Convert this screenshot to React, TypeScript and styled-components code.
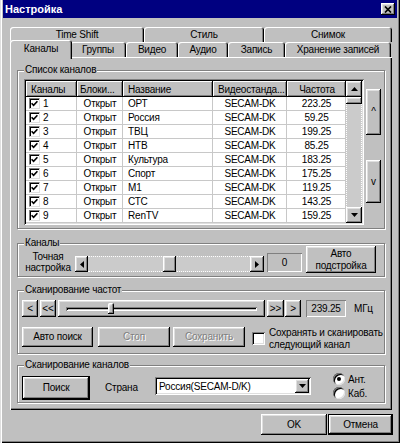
import React from 'react'
import styled, { createGlobalStyle, css } from 'styled-components'

const GlobalStyle = createGlobalStyle`
  html, body {
    margin: 0;
    padding: 0;
    background: #c0c0c0;
  }
  body {
    font-family: 'Liberation Sans', Arial, sans-serif;
    font-size: 10px;
    letter-spacing: -0.2px;
    color: #000;
  }
  * {
    box-sizing: border-box;
  }
`

const raised = css`
  background: #c0c0c0;
  box-shadow: inset -1px -1px #000, inset 1px 1px #fff, inset -2px -2px #808080,
    inset 2px 2px #dfdfdf;
`

const sunken = css`
  box-shadow: inset 1px 1px #808080, inset -1px -1px #fff, inset 2px 2px #000,
    inset -2px -2px #dfdfdf;
`

const staticEdge = css`
  box-shadow: inset 1px 1px #808080, inset -1px -1px #fff;
`

const Window = styled.div`
  width: 400px;
  height: 443px;
  background: #c0c0c0;
  padding: 0 3px 8px 3px;
  box-shadow: inset 1px 0 #dfdfdf, inset 2px 0 #fff, inset -1px -1px #000,
    inset -2px -2px #808080;
  display: flex;
  flex-direction: column;
`

const TitleBar = styled.div`
  height: 18px;
  background: #000080;
  color: #fff;
  display: flex;
  align-items: center;
  justify-content: space-between;
  padding: 0 2px;
`

const TitleText = styled.span`
  font-size: 11px;
  font-weight: bold;
  letter-spacing: 0;
`

const CloseButton = styled.button`
  ${raised};
  width: 14px;
  height: 12px;
  border: 0;
  padding: 0;
  display: flex;
  align-items: center;
  justify-content: center;
`

const TabStrip = styled.div`
  margin: 9px 0 0 7px;
  width: 382px;
  display: flex;
  flex-direction: column;
`

const TabRow = styled.div<{ $indent?: number }>`
  display: flex;
  height: 15px;
  align-items: flex-end;
  padding-left: ${p => p.$indent ?? 0}px;
`

const Tab = styled.div<{ $w: number; $active?: boolean }>`
  position: relative;
  flex: none;
  width: ${p => p.$w}px;
  height: 15px;
  display: flex;
  align-items: center;
  justify-content: center;
  background: #c0c0c0;
  border-radius: 3px 3px 0 0;
  box-shadow: inset 1px 1px #fff, inset -1px 0 #000, inset -2px 0 #808080;
  white-space: nowrap;

  ${p =>
    p.$active &&
    css`
      width: ${p.$w + 4}px;
      height: 19px;
      margin: 0 -2px -2px;
      padding-bottom: 2px;
      z-index: 1;
    `}
`

const Panel = styled.div`
  margin-left: 7px;
  width: 382px;
  height: 353px;
  padding: 13px 7px 7px;
  box-shadow: inset 1px 1px #fff, inset -1px -1px #000, inset -2px -2px #808080;
  display: flex;
  flex-direction: column;
`

const Group = styled.div<{ $mt?: number; $pad: string }>`
  position: relative;
  margin-top: ${p => p.$mt ?? 0}px;
  padding: ${p => p.$pad};
  border: 1px solid #808080;
  box-shadow: inset 1px 1px #fff, 1px 1px #fff;
`

const Legend = styled.span`
  position: absolute;
  top: -7px;
  left: 6px;
  padding: 0 1px;
  line-height: 12px;
  background: #c0c0c0;
  white-space: nowrap;
`

const ListArea = styled.div`
  display: flex;
  align-items: flex-start;
`

const ListView = styled.div`
  width: 340px;
  height: 146px;
  padding: 2px;
  background: #fff;
  ${sunken};
  display: flex;
`

const ListTable = styled.div`
  flex: 1;
  display: flex;
  flex-direction: column;
  overflow: hidden;
`

const columns = css`
  display: grid;
  grid-template-columns: 51px 46px 90px 74px 59px;
`

const HeaderRow = styled.div`
  ${columns};
  height: 16px;
`

const HeaderCell = styled.div<{ $center?: boolean }>`
  background: #c0c0c0;
  box-shadow: inset -1px -1px #000, inset 1px 1px #fff, inset -2px -2px #808080;
  display: flex;
  align-items: center;
  justify-content: ${p => (p.$center ? 'center' : 'flex-start')};
  padding: 0 4px 0 5px;
  white-space: nowrap;
  overflow: hidden;
`

const Row = styled.div`
  ${columns};
  height: 14px;
`

const Cell = styled.div<{ $align?: 'left' | 'center' }>`
  display: flex;
  align-items: center;
  justify-content: ${p => (p.$align === 'center' ? 'center' : 'flex-start')};
  padding: 0 4px 0 5px;
  border-right: 1px solid #c8c8c8;
  border-bottom: 1px solid #c8c8c8;
  white-space: nowrap;
  overflow: hidden;
`

const ChannelCell = styled(Cell)`
  padding-left: 3px;
  gap: 3px;
`

const ListCheck = styled.span`
  width: 11px;
  height: 11px;
  flex: none;
  background: #fff;
  border: 1px solid;
  border-color: #808080 #dfdfdf #dfdfdf #808080;
  box-shadow: inset 1px 1px #000;
  display: flex;
  align-items: center;
  justify-content: center;
`

const VScroll = styled.div`
  width: 16px;
  display: flex;
  flex-direction: column;
`

const ScrollButton = styled.div<{ $w?: number; $h?: number }>`
  ${raised};
  flex: none;
  width: ${p => p.$w ?? 16}px;
  height: ${p => p.$h ?? 16}px;
  display: flex;
  align-items: center;
  justify-content: center;
`

const VThumb = styled.div`
  ${raised};
  height: 7px;
  flex: none;
`

const VTrack = styled.div`
  flex: 1;
  background: #cbcbcb;
  border-left: 1px dotted #fff;
  border-right: 1px dotted #fff;
`

const SideButtons = styled.div`
  margin-left: 2px;
  padding-top: 10px;
  display: flex;
  flex-direction: column;
`

const Button = styled.button<{ $w: number; $h: number; $default?: boolean; $mt?: number }>`
  ${raised};
  flex: none;
  width: ${p => p.$w}px;
  height: ${p => p.$h}px;
  margin-top: ${p => p.$mt ?? 0}px;
  border: 0;
  padding: 0;
  font: inherit;
  letter-spacing: inherit;
  line-height: 12px;
  color: #000;
  text-align: center;
  display: flex;
  align-items: center;
  justify-content: center;

  ${p =>
    p.$default &&
    css`
      border: 1px solid #000;
    `}

  &:disabled {
    color: #808080;
    text-shadow: 1px 1px 0 #fff;
  }
`

const FlexRow = styled.div<{ $align?: string; $h?: number; $mt?: number }>`
  display: flex;
  align-items: ${p => p.$align ?? 'center'};
  height: ${p => (p.$h ? `${p.$h}px` : 'auto')};
  margin-top: ${p => p.$mt ?? 0}px;
`

const Spacer = styled.div<{ $w: number }>`
  flex: none;
  width: ${p => p.$w}px;
`

const FineLabel = styled.div`
  width: 46px;
  line-height: 11px;
  text-align: center;
`

const HScroll = styled.div<{ $w: number }>`
  width: ${p => p.$w}px;
  height: 16px;
  margin-bottom: 1px;
  display: flex;
`

const HTrack = styled.div`
  flex: 1;
  display: flex;
  background: #cbcbcb;
  border-top: 1px dotted #fff;
  border-bottom: 1px dotted #fff;
`

const HThumb = styled.div`
  ${raised};
  width: 13px;
  margin: -1px 0;
  flex: none;
`

const ValueBox = styled.div<{ $w: number; $h: number; $mb?: number }>`
  ${staticEdge};
  flex: none;
  width: ${p => p.$w}px;
  height: ${p => p.$h}px;
  margin-bottom: ${p => p.$mb ?? 0}px;
  display: flex;
  align-items: center;
  justify-content: center;
`

const Trackbar = styled.div`
  ${raised};
  position: relative;
  flex: none;
  width: 207px;
  height: 17px;
  padding: 0 8px;
  display: flex;
  align-items: center;
`

const Groove = styled.div`
  flex: 1;
  height: 4px;
  background: #c0c0c0;
  box-shadow: inset 1px 1px #808080, inset -1px -1px #fff, inset 2px 2px #000;
`

const TrackThumb = styled.div`
  ${raised};
  position: absolute;
  top: 3px;
  width: 6px;
  height: 11px;
  border-radius: 2px 2px 0 0;
`

const Unit = styled.span`
  margin-left: 8px;
`

const CheckBox = styled.span<{ $mt?: number }>`
  flex: none;
  width: 13px;
  height: 13px;
  margin-top: ${p => p.$mt ?? 0}px;
  background: #fff;
  ${sunken};
`

const CheckText = styled.div`
  margin-left: 4px;
  line-height: 12px;
  white-space: nowrap;
`

const CountryLabel = styled.div`
  width: 50px;
  line-height: 24px;
`

const Combo = styled.div`
  flex: none;
  width: 156px;
  height: 18px;
  margin-top: 1px;
  padding: 2px;
  background: #fff;
  ${sunken};
  display: flex;
  align-items: center;
`

const ComboText = styled.span`
  flex: 1;
  padding-left: 2px;
  white-space: nowrap;
`

const RadioGroup = styled.div`
  margin: -4px 0 0 22px;
  display: flex;
  flex-direction: column;
`

const RadioItem = styled.label`
  height: 14px;
  display: flex;
  align-items: center;
  gap: 3px;
`

const RadioCircle = styled.span`
  width: 12px;
  height: 12px;
  border-radius: 50%;
  background: #fff;
  box-shadow: inset 1px 1px #808080, inset -1px -1px #dfdfdf, inset 2px 2px #000;
  display: flex;
  align-items: center;
  justify-content: center;
`

const RadioDot = styled.span`
  width: 4px;
  height: 4px;
  border-radius: 50%;
  background: #000;
`

const DialogButtons = styled.div`
  margin: 4px 4px 0 0;
  display: flex;
  justify-content: flex-end;
  gap: 1px;
`

type Dir = 'left' | 'right' | 'up' | 'down'

const arrowPoints: Record<Dir, string> = {
  left: '4,0 4,7 0,3.5',
  right: '0,0 0,7 4,3.5',
  up: '0,4 7,4 3.5,0',
  down: '0,0 7,0 3.5,4',
}

const Arrow = ({ dir }: { dir: Dir }) => {
  const vertical = dir === 'up' || dir === 'down'
  return (
    <svg width={vertical ? 7 : 4} height={vertical ? 4 : 7} viewBox={vertical ? '0 0 7 4' : '0 0 4 7'}>
      <polygon points={arrowPoints[dir]} fill="#000" />
    </svg>
  )
}

const CheckMark = () => (
  <svg width="7" height="7" viewBox="0 0 7 7">
    <path d="M0.6 3.2 L2.6 5.3 L6.4 1.2" stroke="#000" strokeWidth="1.6" fill="none" />
  </svg>
)

const channels = [
  { n: 1, name: 'ОРТ', freq: '223.25' },
  { n: 2, name: 'Россия', freq: '59.25' },
  { n: 3, name: 'ТВЦ', freq: '199.25' },
  { n: 4, name: 'НТВ', freq: '85.25' },
  { n: 5, name: 'Культура', freq: '183.25' },
  { n: 6, name: 'Спорт', freq: '175.25' },
  { n: 7, name: 'М1', freq: '119.25' },
  { n: 8, name: 'СТС', freq: '143.25' },
  { n: 9, name: 'RenTV', freq: '159.25' },
]

const backTabs = [
  { label: 'Time Shift', w: 134 },
  { label: 'Стиль', w: 120 },
  { label: 'Снимок', w: 128 },
]

const frontTabs = [
  { label: 'Каналы', w: 58 },
  { label: 'Группы', w: 56 },
  { label: 'Видео', w: 52 },
  { label: 'Аудио', w: 50 },
  { label: 'Запись', w: 57 },
  { label: 'Хранение записей', w: 106 },
]

const fineTune = { value: 0, min: -50, max: 50 }
const scanFreq = { value: 239.25, min: 48.25, max: 863.25 }

const App = () => {
  const fineFraction = (fineTune.value - fineTune.min) / (fineTune.max - fineTune.min)
  const scanFraction = (scanFreq.value - scanFreq.min) / (scanFreq.max - scanFreq.min)

  return (
    <>
      <GlobalStyle />
      <Window>
        <TitleBar>
          <TitleText>Настройка</TitleText>
          <CloseButton aria-label="Закрыть">
            <svg width="8" height="7" viewBox="0 0 8 7">
              <path d="M1 0.5 L7 6.5 M7 0.5 L1 6.5" stroke="#000" strokeWidth="1.7" />
            </svg>
          </CloseButton>
        </TitleBar>

        <TabStrip>
          <TabRow>
            {backTabs.map(t => (
              <Tab key={t.label} $w={t.w}>
                {t.label}
              </Tab>
            ))}
          </TabRow>
          <TabRow $indent={2}>
            {frontTabs.map((t, i) => (
              <Tab key={t.label} $w={t.w} $active={i === 0}>
                {t.label}
              </Tab>
            ))}
          </TabRow>
        </TabStrip>

        <Panel>
          <Group $pad="8px 4px 3px 6px">
            <Legend>Список каналов</Legend>
            <ListArea>
              <ListView>
                <ListTable>
                  <HeaderRow>
                    <HeaderCell>Каналы</HeaderCell>
                    <HeaderCell style={{ paddingLeft: 3 }}>Блоки...</HeaderCell>
                    <HeaderCell>Название</HeaderCell>
                    <HeaderCell>Видеостанда...</HeaderCell>
                    <HeaderCell $center>Частота</HeaderCell>
                  </HeaderRow>
                  {channels.map(c => (
                    <Row key={c.n}>
                      <ChannelCell>
                        <ListCheck>
                          <CheckMark />
                        </ListCheck>
                        {c.n}
                      </ChannelCell>
                      <Cell $align="center">Открыт</Cell>
                      <Cell>{c.name}</Cell>
                      <Cell $align="center">SECAM-DK</Cell>
                      <Cell $align="center">{c.freq}</Cell>
                    </Row>
                  ))}
                </ListTable>
                <VScroll>
                  <ScrollButton>
                    <Arrow dir="up" />
                  </ScrollButton>
                  <VThumb />
                  <VTrack />
                  <ScrollButton>
                    <Arrow dir="down" />
                  </ScrollButton>
                </VScroll>
              </ListView>
              <SideButtons>
                <Button $w={15} $h={46}>^</Button>
                <Button $w={15} $h={43} $mt={25}>v</Button>
              </SideButtons>
            </ListArea>
          </Group>

          <Group $mt={14} $pad="2px 8px 3px 7px">
            <Legend>Каналы</Legend>
            <FlexRow $align="flex-end" $h={27}>
              <FineLabel>
                Точная
                <br />
                настройка
              </FineLabel>
              <Spacer $w={4} />
              <HScroll $w={189}>
                <ScrollButton $w={13}>
                  <Arrow dir="left" />
                </ScrollButton>
                <HTrack>
                  <HThumb style={{ marginLeft: fineFraction * (162 - 13) }} />
                </HTrack>
                <ScrollButton $w={14}>
                  <Arrow dir="right" />
                </ScrollButton>
              </HScroll>
              <Spacer $w={3} />
              <ValueBox $w={35} $h={19} $mb={1}>
                {fineTune.value}
              </ValueBox>
              <Spacer $w={4} />
              <Button $w={70} $h={27}>
                Авто
                <br />
                подстройка
              </Button>
            </FlexRow>
          </Group>

          <Group $mt={13} $pad="9px 4px 6px 4px">
            <Legend>Сканирование частот</Legend>
            <FlexRow $h={17}>
              <Button $w={16} $h={17}>&lt;</Button>
              <Spacer $w={2} />
              <Button $w={16} $h={17}>&lt;&lt;</Button>
              <Spacer $w={2} />
              <Trackbar>
                <Groove />
                <TrackThumb style={{ left: 8 + scanFraction * 191 - 3 }} />
              </Trackbar>
              <Spacer $w={2} />
              <Button $w={17} $h={17}>&gt;&gt;</Button>
              <Spacer $w={1} />
              <Button $w={16} $h={17}>&gt;</Button>
              <Spacer $w={5} />
              <ValueBox $w={40} $h={17}>
                {scanFreq.value.toFixed(2)}
              </ValueBox>
              <Unit>МГц</Unit>
            </FlexRow>
            <FlexRow $align="flex-start" $h={20} $mt={10}>
              <Button $w={71} $h={20}>Авто поиск</Button>
              <Spacer $w={5} />
              <Button $w={72} $h={20} disabled>
                Стоп
              </Button>
              <Spacer $w={3} />
              <Button $w={72} $h={20} disabled>
                Сохранить
              </Button>
              <Spacer $w={7} />
              <CheckBox $mt={5} />
              <CheckText>
                Сохранять и сканировать
                <br />
                следующий канал
              </CheckText>
            </FlexRow>
          </Group>

          <Group $mt={11} $pad="10px 4px 2px 4px">
            <Legend>Сканирование каналов</Legend>
            <FlexRow $align="flex-start" $h={24}>
              <Button $w={68} $h={24} $default>
                Поиск
              </Button>
              <Spacer $w={15} />
              <CountryLabel>Страна</CountryLabel>
              <Combo>
                <ComboText>Россия(SECAM-D/K)</ComboText>
                <ScrollButton $w={14} $h={14}>
                  <Arrow dir="down" />
                </ScrollButton>
              </Combo>
              <RadioGroup>
                <RadioItem>
                  <RadioCircle>
                    <RadioDot />
                  </RadioCircle>
                  Ант.
                </RadioItem>
                <RadioItem>
                  <RadioCircle />
                  Каб.
                </RadioItem>
              </RadioGroup>
            </FlexRow>
          </Group>
        </Panel>

        <DialogButtons>
          <Button $w={66} $h={21}>OK</Button>
          <Button $w={65} $h={21} $default>
            Отмена
          </Button>
        </DialogButtons>
      </Window>
    </>
  )
}

export default App
